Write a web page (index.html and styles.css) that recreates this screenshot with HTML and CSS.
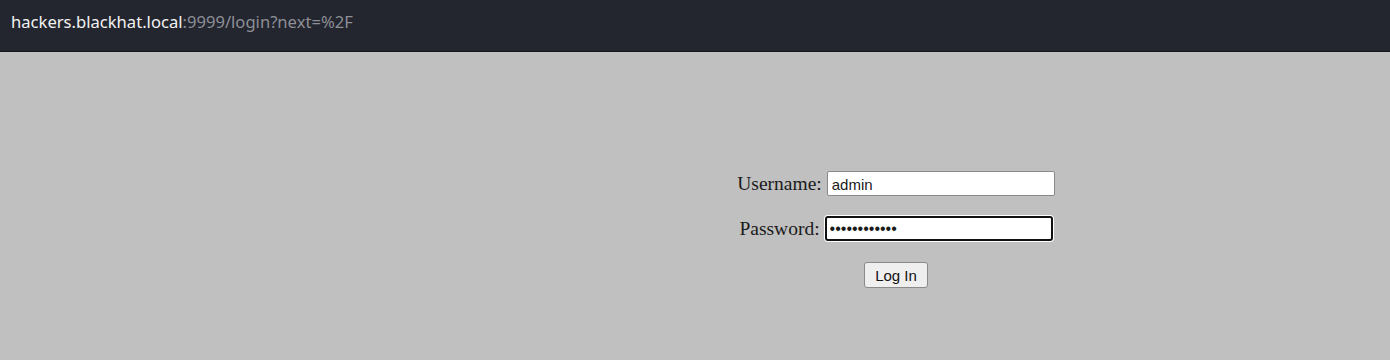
FILE: index.html
```html
<!DOCTYPE html>
<html lang="en">
  <head>
    <meta charset="utf-8">
    <title>Login</title>
    <link rel="stylesheet" href="styles.css">
  </head>
  <body>
    <div class="urlbar">
      <span class="host">hackers.blackhat.local</span><span class="path">:9999/login?next=%2F</span>
    </div>
    <main class="page">
      <div class="side"></div>
      <form class="login" action="/login?next=%2F" method="post">
        <div class="row">
          <label for="username">Username:</label>
          <input type="text" id="username" name="username" value="admin">
        </div>
        <div class="row">
          <label for="password">Password:</label>
          <input type="password" id="password" name="password" class="focused" value="adminpassw0r">
        </div>
        <div class="row">
          <button type="submit" class="button">Log In</button>
        </div>
      </form>
    </main>
  </body>
</html>
```

FILE: styles.css
```css
html, body {
  margin: 0;
  padding: 0;
  height: 100%;
}

body {
  background: #C0C0C0;
  font-family: "Liberation Serif", "Times New Roman", serif;
}

.urlbar {
  height: 52px;
  box-sizing: border-box;
  padding: 0 11px 8px;
  display: flex;
  align-items: center;
  background: #23252F;
  border-bottom: 1px solid #15161C;
  font-family: "Noto Sans", "Open Sans", sans-serif;
  font-size: 16.6px;
}

.urlbar .host {
  color: #F2F2F2;
}

.urlbar .path {
  color: #8D8F96;
}

.page {
  display: grid;
  grid-template-columns: 402px 1fr;
  padding-top: 119px;
}

.login {
  display: flex;
  flex-direction: column;
  gap: 20px;
}

.row {
  display: flex;
  justify-content: center;
  align-items: center;
  gap: 5px;
  font-size: 19.5px;
  color: #1A1A1A;
  height: 25px;
}

.row input {
  width: 228px;
  height: 25px;
  box-sizing: border-box;
  padding: 1px 4px 0;
  border: 1px solid #8A8A8A;
  border-radius: 2px;
  background: #FFFFFF;
  font-family: "Liberation Sans", Arial, sans-serif;
  font-size: 15px;
  color: #1A1A1A;
}

.row input.focused {
  border: 2px solid #101010;
  border-radius: 3px;
  box-shadow: 0 0 0 1px #FFFFFF;
  padding-left: 3px;
  font-size: 16px;
}

.button {
  height: 26px;
  padding: 0 10px;
  margin-top: 3px;
  background: #EFEFEF;
  border: 1px solid #8A8A8A;
  border-radius: 3px;
  font-family: "Liberation Sans", Arial, sans-serif;
  font-size: 15px;
  color: #111111;
}
```
